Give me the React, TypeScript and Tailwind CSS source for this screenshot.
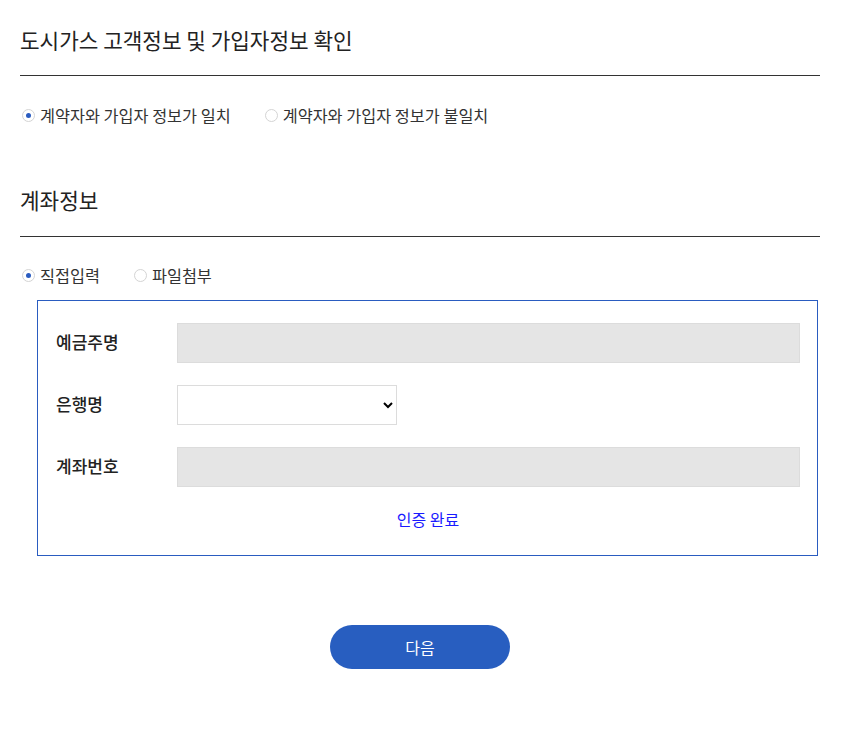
import { useState } from "react";

type RadioProps = {
  label: string;
  checked: boolean;
  onClick: () => void;
};

const Radio = ({ label, checked, onClick }: RadioProps) => (
  <button
    type="button"
    onClick={onClick}
    className="flex items-center gap-[5px] text-[16.3px] leading-6 text-[#333]"
  >
    <span className="w-[13px] h-[13px] rounded-full border border-[#d4d4d4] bg-white flex items-center justify-center">
      {checked && <span className="w-[5px] h-[5px] rounded-full bg-[#2a5cc0]" />}
    </span>
    {label}
  </button>
);

const SectionTitle = ({ children, pb }: { children: string; pb: string }) => (
  <div className={`border-b border-[#333] ${pb}`}>
    <h2 className="text-[21.3px] leading-[30px] text-[#222]">{children}</h2>
  </div>
);

export default function App() {
  const [match, setMatch] = useState(true);
  const [direct, setDirect] = useState(true);

  return (
    <div className="w-[800px] ml-5 pt-[25px] pb-[72px] font-['Noto_Sans_CJK_KR','Noto_Sans',sans-serif] bg-white">
      <SectionTitle pb="pb-[20px]">도시가스 고객정보 및 가입자정보 확인</SectionTitle>

      <div className="mt-[27px] flex gap-[34px] pl-[2px]">
        <Radio label="계약자와 가입자 정보가 일치" checked={match} onClick={() => setMatch(true)} />
        <Radio label="계약자와 가입자 정보가 불일치" checked={!match} onClick={() => setMatch(false)} />
      </div>

      <div className="mt-[58px]">
        <SectionTitle pb="pb-[21px]">계좌정보</SectionTitle>
      </div>

      <div className="mt-[26px] flex gap-[34px] pl-[2px]">
        <Radio label="직접입력" checked={direct} onClick={() => setDirect(true)} />
        <Radio label="파일첨부" checked={!direct} onClick={() => setDirect(false)} />
      </div>

      {/* 계좌 입력 */}
      <div className="mt-[13px] ml-[17px] w-[781px] border border-[#2a5cc0] pt-[22px] pb-[24px] pr-[17px] pl-[18px]">
        <div className="flex flex-col gap-[22px]">
          <div className="flex items-center">
            <span className="w-[121px] text-[17px] font-medium text-[#222] -mt-[3px]">예금주명</span>
            <input
              readOnly
              className="flex-1 h-[40px] bg-[#e5e5e5] border border-[#dcdcdc] outline-none px-3"
            />
          </div>
          <div className="flex items-center">
            <span className="w-[121px] text-[17px] font-medium text-[#222] -mt-[3px]">은행명</span>
            <select className="w-[220px] h-[40px] bg-white border border-[#dcdcdc] outline-none px-2 text-[15px]">
              <option value=""></option>
            </select>
          </div>
          <div className="flex items-center">
            <span className="w-[121px] text-[17px] font-medium text-[#222] -mt-[3px]">계좌번호</span>
            <input
              readOnly
              className="flex-1 h-[40px] bg-[#e5e5e5] border border-[#dcdcdc] outline-none px-3"
            />
          </div>
        </div>
        <p className="mt-[20px] text-center text-[16px] leading-6 text-[#1a1aff]">인증 완료</p>
      </div>

      <div className="mt-[69px] flex justify-center">
        <button
          type="button"
          className="w-[180px] h-[44px] rounded-full bg-[#285ec0] text-white text-[16px]"
        >
          다음
        </button>
      </div>
    </div>
  );
}
